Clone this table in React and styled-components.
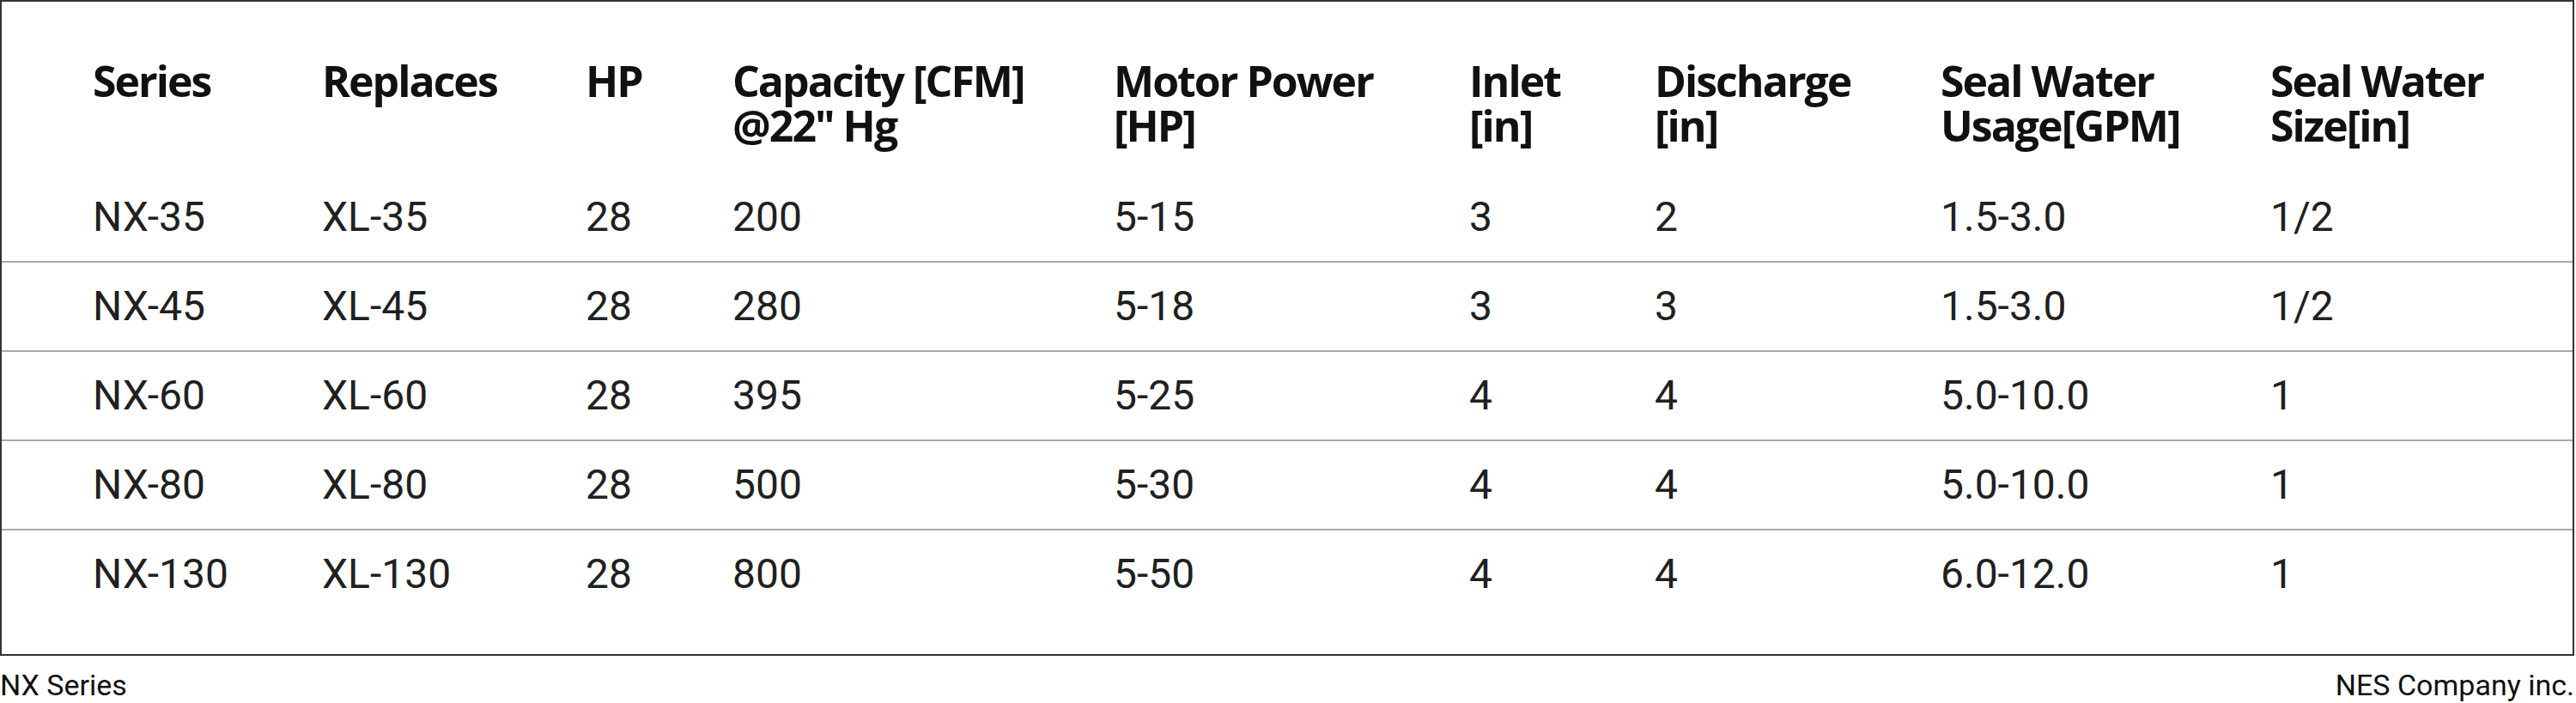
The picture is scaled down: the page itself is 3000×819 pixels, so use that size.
import React from 'react'
import styled, { createGlobalStyle } from 'styled-components'

const GlobalStyle = createGlobalStyle`
  html, body {
    margin: 0;
    padding: 0;
    background: #fff;
  }
`

const columns = '267px 307px 171px 444px 414px 216px 333px 384px 1fr'

const Page = styled.div`
  width: 2998px;
`

const Table = styled.div`
  border: 2px solid #333;
  padding: 66px 0 42px;
  background: #fff;
`

const Row = styled.div`
  display: grid;
  grid-template-columns: ${columns};
  padding-left: 106px;
  border-bottom: ${(p) => (p.$last ? 'none' : '2px solid #aaa')};
`

const HeadCell = styled.div`
  font-family: 'Open Sans', sans-serif;
  font-weight: 700;
  font-size: 50px;
  line-height: 52px;
  letter-spacing: -2px;
  color: #111;
  padding-bottom: 30px;
  white-space: pre-line;
`

const Cell = styled.div`
  font-family: Roboto, sans-serif;
  font-weight: 400;
  font-size: 48px;
  line-height: 56px;
  color: #202020;
  padding: 23px 0;
`

const Footer = styled.div`
  display: flex;
  justify-content: space-between;
  margin-top: 14px;
  font-family: Roboto, sans-serif;
  font-size: 34px;
  line-height: 40px;
  color: #111;
`

const headers = [
  'Series',
  'Replaces',
  'HP',
  'Capacity [CFM]\n@22" Hg',
  'Motor Power\n[HP]',
  'Inlet\n[in]',
  'Discharge\n[in]',
  'Seal Water\nUsage[GPM]',
  'Seal Water\nSize[in]',
]

const rows = [
  ['NX-35', 'XL-35', '28', '200', '5-15', '3', '2', '1.5-3.0', '1/2'],
  ['NX-45', 'XL-45', '28', '280', '5-18', '3', '3', '1.5-3.0', '1/2'],
  ['NX-60', 'XL-60', '28', '395', '5-25', '4', '4', '5.0-10.0', '1'],
  ['NX-80', 'XL-80', '28', '500', '5-30', '4', '4', '5.0-10.0', '1'],
  ['NX-130', 'XL-130', '28', '800', '5-50', '4', '4', '6.0-12.0', '1'],
]

const App = () => (
  <Page>
    <GlobalStyle />
    <Table>
      <Row $last>
        {headers.map((h) => (
          <HeadCell key={h}>{h}</HeadCell>
        ))}
      </Row>
      {rows.map((r, i) => (
        <Row key={r[0]} $last={i === rows.length - 1}>
          {r.map((v, j) => (
            <Cell key={j}>{v}</Cell>
          ))}
        </Row>
      ))}
    </Table>
    <Footer>
      <span>NX Series</span>
      <span>NES Company inc.</span>
    </Footer>
  </Page>
)

export default App
